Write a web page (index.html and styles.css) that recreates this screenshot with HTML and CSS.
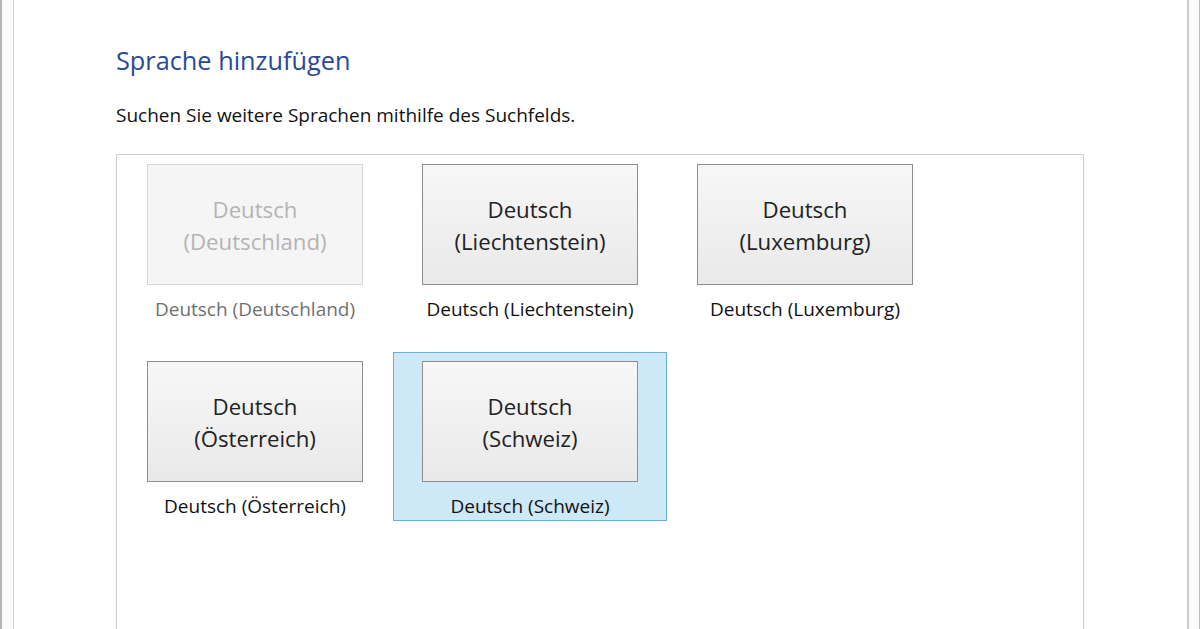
FILE: index.html
```html
<!DOCTYPE html>
<html lang="de">
<head>
<meta charset="utf-8">
<title>Sprache hinzufügen</title>
<link rel="stylesheet" href="styles.css">
</head>
<body>
<div class="frame">
  <div class="edge-left"></div>
  <main class="content">
    <h1 class="title">Sprache hinzufügen</h1>
    <p class="hint">Suchen Sie weitere Sprachen mithilfe des Suchfelds.</p>
    <div class="list">
      <div class="grid">
        <div class="cell disabled">
          <div class="tile">Deutsch<br>(Deutschland)</div>
          <div class="label">Deutsch (Deutschland)</div>
        </div>
        <div class="cell">
          <div class="tile">Deutsch<br>(Liechtenstein)</div>
          <div class="label">Deutsch (Liechtenstein)</div>
        </div>
        <div class="cell">
          <div class="tile">Deutsch<br>(Luxemburg)</div>
          <div class="label">Deutsch (Luxemburg)</div>
        </div>
        <div class="cell">
          <div class="tile">Deutsch<br>(Österreich)</div>
          <div class="label">Deutsch (Österreich)</div>
        </div>
        <div class="cell selected">
          <div class="tile">Deutsch<br>(Schweiz)</div>
          <div class="label">Deutsch (Schweiz)</div>
        </div>
      </div>
    </div>
  </main>
  <div class="edge-right"></div>
</div>
</body>
</html>
```

FILE: styles.css
```css
html, body {
  margin: 0;
  padding: 0;
  background: #ffffff;
  height: 100%;
  overflow: hidden;
}

body {
  font-family: "Open Sans", "Noto Sans", "Liberation Sans", sans-serif;
  color: #1a1a1a;
}

.frame {
  display: flex;
  height: 629px;
}

.edge-left {
  width: 11px;
  flex: none;
  border-left: 2px solid #b4b4b4;
  border-right: 1px solid #cfcfcf;
  background: #fbfbfb;
}

.edge-right {
  width: 10px;
  flex: none;
  border-left: 2px solid #cdcdcd;
  border-right: 1px solid #bdbdbd;
  background: #fbfbfb;
}

.content {
  flex: 1;
  padding-left: 102px;
  overflow: hidden;
}

.title {
  margin: 44px 0 0 0;
  font-size: 25.3px;
  font-weight: 400;
  line-height: 32px;
  color: #2a4a94;
}

.hint {
  margin: 27px 0 0 0;
  font-size: 19px;
  line-height: 24px;
  color: #111;
}

.list {
  margin-top: 27px;
  width: 968px;
  height: 520px;
  border: 1px solid #cccccc;
  border-bottom: none;
  padding-left: 1px;
  box-sizing: border-box;
}

.grid {
  display: grid;
  grid-template-columns: repeat(3, 274px);
  grid-auto-rows: 169px;
  column-gap: 1px;
  row-gap: 28px;
}

.cell {
  box-sizing: border-box;
  padding-top: 8px;
  display: flex;
  flex-direction: column;
  align-items: center;
  border: 1px solid transparent;
}

.cell.selected {
  background: #cde8f7;
  border-color: #68afd8;
}

.tile {
  box-sizing: border-box;
  width: 216px;
  height: 121px;
  border: 1px solid #8e8e8e;
  background: linear-gradient(#f7f7f7, #e9e9e9);
  display: flex;
  align-items: center;
  justify-content: center;
  text-align: center;
  font-size: 22.2px;
  line-height: 32px;
  color: #222;
  padding-top: 3px;
}

.label {
  margin-top: 12px;
  font-size: 19px;
  line-height: 24px;
  color: #111;
}

.cell.disabled .tile {
  border-color: #d4d4d4;
  background: #f5f5f5;
  color: #b4b4b4;
}

.cell.disabled .label {
  color: #707070;
}
```
